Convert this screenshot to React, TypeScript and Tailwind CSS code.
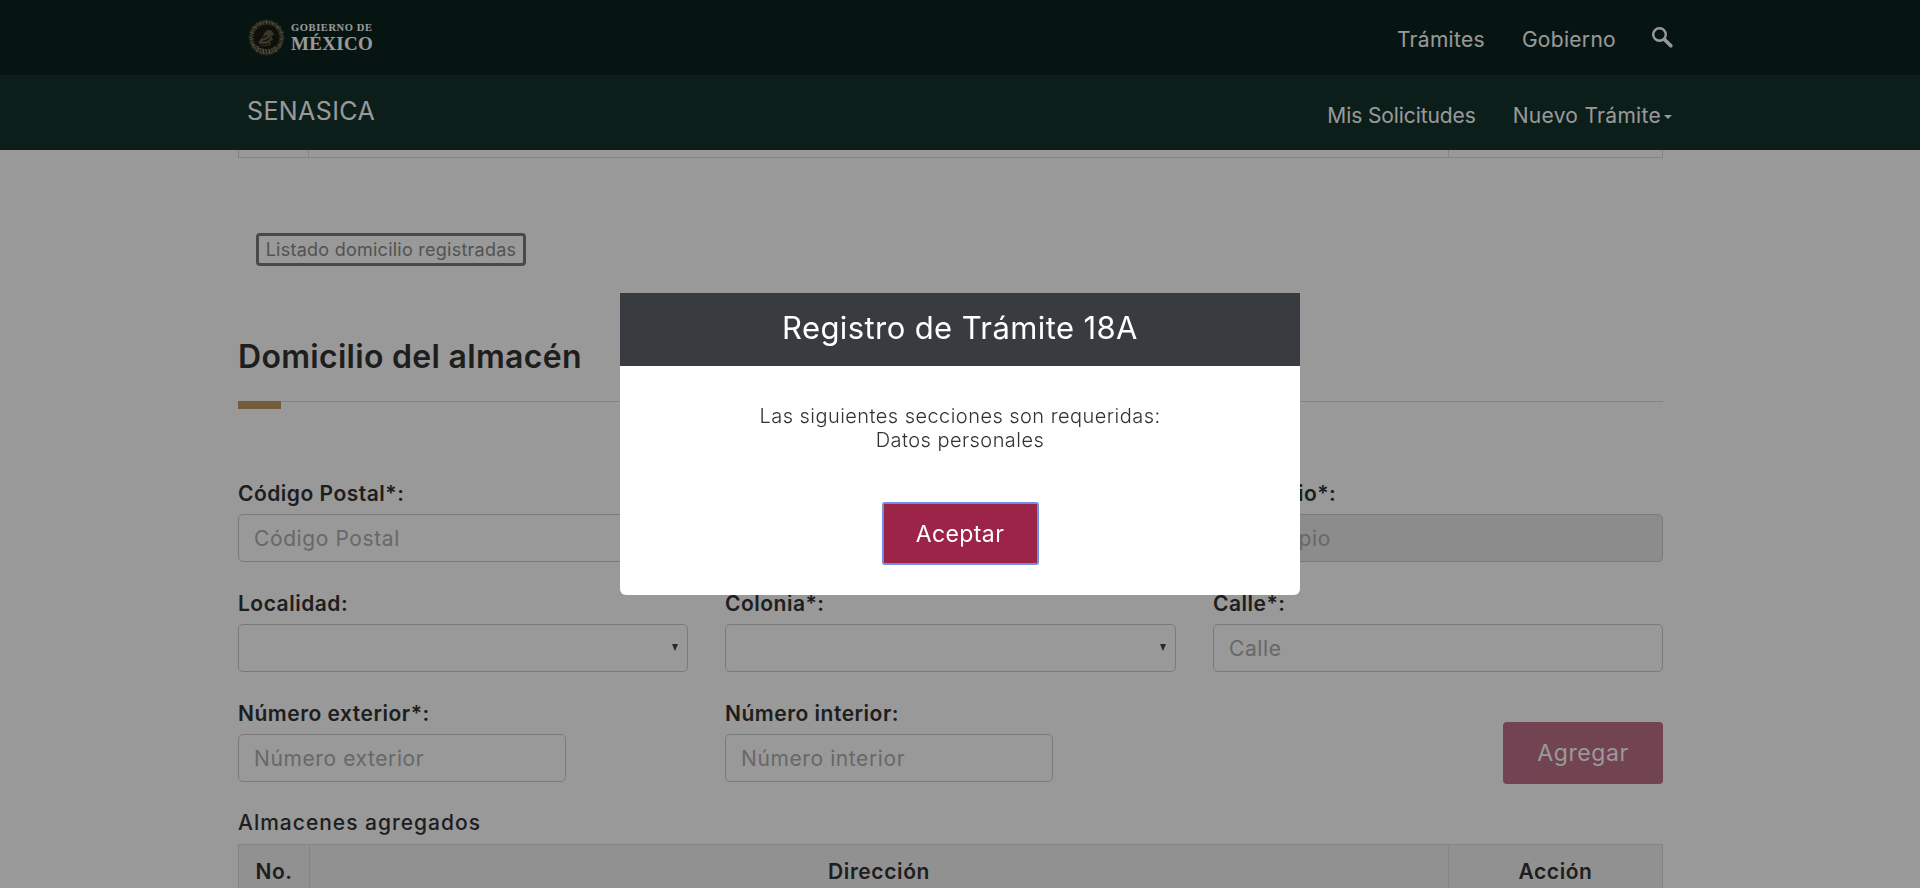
import React from 'react';

const font = "font-['Inter','Liberation_Sans',sans-serif]";

const Emblem: React.FC = () => {
  const ticks = Array.from({ length: 60 }, (_, i) => i * 6);
  return (
    <svg width="37" height="37" viewBox="0 0 37 37" className="shrink-0">
      <circle cx="18.5" cy="18.5" r="18" fill="#2b2c20" />
      {ticks.map((a, i) => (
        <line
          key={a}
          x1="18.5"
          y1={i % 3 === 0 ? 0.8 : 1.6}
          x2="18.5"
          y2={i % 2 === 0 ? 5.5 : 4}
          stroke={i % 4 === 0 ? '#8f8d70' : '#6e6c55'}
          strokeWidth="1.2"
          transform={`rotate(${a} 18.5 18.5)`}
        />
      ))}
      <circle cx="18.5" cy="18.5" r="12.8" fill="#1a1b12" />
      <path d="M10 23c2-1 3-4 5-6 1-3 3-6 6-6 3 0 4 2 5 5l-3 1 2 4-3 1 1 3c-3 2-7 3-10 1l-3-3z" fill="#5e5c46" />
      <path d="M13 18c2 1 5 0 6-2M15 22c2 0 5-1 7-3M13 25c3 1 6 1 8-1" fill="none" stroke="#1b1c12" strokeWidth="1.2" />
      <path d="M9 27c3 3 6 4 9.500 4s7-1 9.500-4" fill="none" stroke="#85836a" strokeWidth="1.500" strokeDasharray="2 1" />
    </svg>
  );
};

const SearchIcon: React.FC = () => (
  <svg width="22" height="22" viewBox="0 0 22 22" fill="none" stroke="currentColor">
    <circle cx="8.500" cy="8.500" r="6.300" strokeWidth="2.400" />
    <path d="M13.500 13.500L19.800 19.800" strokeWidth="3.600" strokeLinecap="round" />
  </svg>
);

const labelClass = 'block text-[21px] leading-[24px] tracking-[0.5px] font-semibold text-[#333] mb-[8px]';

const Field: React.FC<{ label: string; placeholder?: string; disabled?: boolean; className?: string }> = ({ label, placeholder, disabled, className = '' }) => (
  <div>
    <label className={labelClass}>{label}</label>
    <input
      disabled={disabled}
      placeholder={placeholder}
      className={`block h-[48px] px-[15px] border border-[#ccc] rounded-[5px] text-[21px] tracking-[0.6px] placeholder:text-[#adadad] ${disabled ? 'bg-[#eaeaea]' : 'bg-white'} ${className || 'w-full'}`}
    />
  </div>
);

const SelectField: React.FC<{ label: string }> = ({ label }) => (
  <div>
    <label className={labelClass}>{label}</label>
    <div className="relative">
      <select className="block w-full h-[48px] px-[12px] border border-[#ccc] rounded-[5px] bg-white text-[18px] appearance-none">
        <option></option>
      </select>
      <span className="absolute right-[10px] top-[20px] border-x-[3px] border-x-transparent border-t-[7px] border-t-[#444]"></span>
    </div>
  </div>
);

export default function App() {
  return (
    <div className={`h-screen overflow-hidden flex flex-col bg-white pr-[19px] ${font}`}>
      {/* Barra de gobierno */}
      <div className="h-[75px] shrink-0 -mr-[19px] bg-[#0c231e] pr-[19px]">
        <div className="w-[1425px] mx-auto h-full flex items-center pl-[10px] text-white">
          <div className="flex items-center gap-[6px] -mt-[1px]">
            <Emblem />
            <div className="font-['Liberation_Serif',serif] font-bold leading-none mt-[2px]">
              <div className="text-[10.500px] tracking-[0.6px]">GOBIERNO DE</div>
              <div className="text-[19px] tracking-[0.3px] mt-[1px]">MÉXICO</div>
            </div>
          </div>
          <nav className="ml-auto flex items-center text-[21px] tracking-[0.3px]">
            <a className="mr-[37px] mt-[5px]">Trámites</a>
            <a className="mr-[35px] mt-[5px]">Gobierno</a>
            <span className="mr-[-10px] -mt-[2px]"><SearchIcon /></span>
          </nav>
        </div>
      </div>

      {/* Barra SENASICA */}
      <div className="h-[75px] shrink-0 -mr-[19px] bg-[#13322b] pr-[19px] relative z-10">
        <div className="w-[1425px] mx-auto h-full flex items-center pl-[9px] text-white">
          <span className="text-[25px] tracking-[0.4px] -mt-[2px]">SENASICA</span>
          <nav className="ml-auto flex items-center text-[21px] tracking-[0.3px] mt-[6px] mr-[-9px]">
            <a className="mr-[37px] tracking-[-0.1px]">Mis Solicitudes</a>
            <a>Nuevo Trámite</a>
            <span className="ml-[3px] mt-[2px] border-x-[4px] border-x-transparent border-t-[4px] border-t-white"></span>
          </nav>
        </div>
      </div>

      <main className="w-[1425px] mx-auto text-[#333]">
        {/* Resto de la tabla de arriba */}
        <div className="h-[8px] flex border-x border-b border-[#ddd]">
          <div className="w-[70px] border-r border-[#ddd]"></div>
          <div className="w-[1140px] border-r border-[#ddd]"></div>
        </div>

        <button className="block mt-[75px] ml-[18px] h-[33px] w-[270px] border-[3px] border-[#7a7a7a] rounded-[4px] text-[18px] tracking-[0.25px] text-[#8a8a8a] leading-none">
          Listado domicilio registradas
        </button>

        <h2 className="mt-[73px] text-[32px] leading-[36px] tracking-[0.3px] font-semibold text-[#333]">Domicilio del almacén</h2>
        <div className="relative mt-[26px] h-px bg-[#ddd]">
          <div className="absolute left-0 top-0 w-[43px] h-[8px] bg-[#c49a66]"></div>
        </div>

        <div className="mt-[80px] grid grid-cols-[450px_451px_450px] gap-x-[37px] gap-y-[30px]">
          <Field label="Código Postal*:" placeholder="Código Postal" />
          <Field label="Estado*:" placeholder="Estado" disabled />
          <Field label="Municipio*:" placeholder="Municipio" disabled />
          <SelectField label="Localidad:" />
          <SelectField label="Colonia*:" />
          <Field label="Calle*:" placeholder="Calle" />
          <Field label="Número exterior*:" placeholder="Número exterior" className="w-[328px]" />
          <Field label="Número interior:" placeholder="Número interior" className="w-[328px]" />
          <div className="flex justify-end pt-[20px]">
            <button disabled className="w-[160px] h-[62px] rounded-[4px] bg-[#9d2449] opacity-65 text-white text-[23px] tracking-[0.6px]">Agregar</button>
          </div>
        </div>

        <div className="mt-[27px] text-[21px] leading-[24px] tracking-[1px] font-medium">Almacenes agregados</div>
        <table className="mt-[9px] w-full border border-[#ddd] border-collapse table-fixed">
          <thead>
            <tr className="bg-[#f2f2f2] text-[21px] tracking-[0.6px]">
              <th className="w-[71px] h-[52px] pt-[2px] border border-[#ddd] font-semibold">No.</th>
              <th className="pt-[2px] border border-[#ddd] font-semibold">Dirección</th>
              <th className="w-[214px] pt-[2px] border border-[#ddd] font-semibold">Acción</th>
            </tr>
          </thead>
        </table>
      </main>

      {/* Modal */}
      <div className="fixed inset-0 z-20 bg-black/40 flex justify-center items-start pt-[293px]">
        <div className="w-[680px] h-[302px] bg-white rounded-b-[6px] overflow-hidden flex flex-col">
          <div className="h-[73px] shrink-0 bg-[#383c40] text-white text-[31px] tracking-[0.4px] flex items-center justify-center pb-[2px]">Registro de Trámite 18A</div>
          <div className="flex-1 flex flex-col items-center pt-[38px]">
            <p className="text-center text-[20px] leading-[24px] tracking-[0.45px] font-light text-[#333]">
              Las siguientes secciones son requeridas:<br />Datos personales
            </p>
            <button className="mt-[50px] pt-[1px] w-[157px] h-[63px] bg-[#9d2449] border-2 border-[#6f8fe0] rounded-[3px] text-white text-[23px] tracking-[0.4px]">Aceptar</button>
          </div>
        </div>
      </div>
    </div>
  );
}
